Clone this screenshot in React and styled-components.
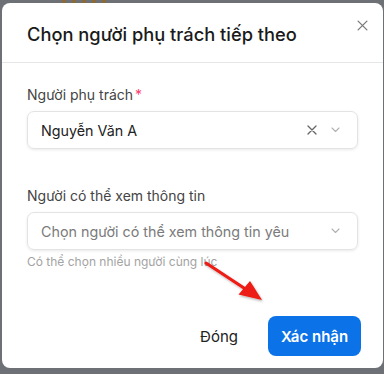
import React from "react";
import styled, { createGlobalStyle } from "styled-components";

const Global = createGlobalStyle`
  html, body { margin: 0; padding: 0; }
  body {
    background: #6d7074;
    font-family: Inter, "Noto Sans", sans-serif;
    width: 384px;
    height: 374px;
    overflow: hidden;
  }
`;

const Backdrop = styled.div`
  position: relative;
  width: 384px;
  height: 374px;
  padding: 3px 0 0 2px;
  box-sizing: border-box;
`;

const BehindBar = styled.div`
  display: flex;
  gap: 6px;
  position: absolute;
  top: 0;
  left: 62px;
  height: 3px;
`;

const BehindBit = styled.span`
  width: ${(p) => p.w}px;
  height: 3px;
  background: ${(p) => p.c};
`;

const Modal = styled.div`
  position: relative;
  width: 381px;
  height: 365px;
  background: #fff;
  border-radius: 8px;
  display: flex;
  flex-direction: column;
  box-sizing: border-box;
`;

const Header = styled.div`
  display: flex;
  justify-content: space-between;
  align-items: flex-start;
  height: 60px;
  padding: 20px 14px 0 25px;
  border-bottom: 1px solid #e6e6e6;
  box-sizing: border-box;
  flex-shrink: 0;
`;

const Title = styled.h2`
  margin: 0;
  font-size: 18.3px;
  line-height: 22px;
  font-weight: 500;
  color: #1a1a1a;
`;

const CloseBtn = styled.button`
  border: 0;
  background: none;
  padding: 0;
  margin-top: -5px;
  width: 14px;
  height: 14px;
  display: flex;
  align-items: center;
  justify-content: center;
  color: #7a7a7a;
  cursor: pointer;
`;

const Body = styled.div`
  padding: 22px 25px 0 25px;
  display: flex;
  flex-direction: column;
`;

const Field = styled.div`
  display: flex;
  flex-direction: column;
  margin-bottom: ${(p) => p.mb || 0}px;
`;

const Label = styled.label`
  font-size: 14px;
  line-height: 20px;
  color: #444;
  margin-bottom: 6px;
`;

const Req = styled.span`
  color: #ff3b6b;
  margin-left: 2px;
`;

const SelectBox = styled.div`
  height: 38px;
  box-sizing: border-box;
  border: 1px solid #e3e3e3;
  border-radius: 7px;
  box-shadow: 0 1px 3px rgba(0, 0, 0, 0.09);
  display: flex;
  align-items: center;
  padding: 0 17px 0 13px;
  gap: 14px;
`;

const Value = styled.span`
  flex: 1;
  font-size: 14.3px;
  color: ${(p) => (p.$placeholder ? "#7b7b7b" : "#222")};
  white-space: nowrap;
  overflow: hidden;
`;

const IconWrap = styled.span`
  display: flex;
  color: ${(p) => p.c};
`;

const Help = styled.div`
  margin-top: 3px;
  font-size: 12px;
  line-height: 18px;
  color: #a3a3a3;
`;

const Footer = styled.div`
  margin-top: auto;
  display: flex;
  justify-content: flex-end;
  align-items: center;
  gap: 14px;
  padding: 0 22px 12px 0;
`;

const TextBtn = styled.button`
  border: 0;
  background: none;
  font-family: inherit;
  font-size: 15px;
  color: #222;
  padding: 0 16px;
  height: 40px;
  cursor: pointer;
`;

const PrimaryBtn = styled.button`
  border: 0;
  background: #0b72e7;
  color: #fff;
  font-family: inherit;
  font-size: 15px;
  font-weight: 600;
  width: 93px;
  height: 40px;
  border-radius: 8px;
  cursor: pointer;
`;

const Arrow = styled.svg`
  position: absolute;
  left: 0;
  top: 0;
  pointer-events: none;
  overflow: visible;
`;

const XIcon = ({ size = 10, sw = 1.3 }) => (
  <svg width={size} height={size} viewBox="0 0 10 10">
    <path d="M1 1L9 9M9 1L1 9" stroke="currentColor" strokeWidth={sw} strokeLinecap="round" />
  </svg>
);

const Chevron = () => (
  <svg width="9" height="6" viewBox="0 0 9 6">
    <path d="M1 1L4.5 4.5L8 1" stroke="currentColor" strokeWidth="1.1" fill="none" strokeLinecap="round" strokeLinejoin="round" />
  </svg>
);

export default function App() {
  return (
    <>
      <Global />
      <Backdrop>
        <BehindBar>
          <BehindBit w={4} c="#8a6a3a" />
          <BehindBit w={4} c="#8a6a3a" />
          <BehindBit w={4} c="#8a6a3a" />
          <BehindBit w={4} c="#8a6a3a" />
          <BehindBit w={4} c="#8a6a3a" />
        </BehindBar>
        <Modal>
          <Header>
            <Title>Chọn người phụ trách tiếp theo</Title>
            <CloseBtn aria-label="close">
              <XIcon size={11} sw={1.2} />
            </CloseBtn>
          </Header>
          <Body>
            <Field mb={37}>
              <Label>
                Người phụ trách<Req>*</Req>
              </Label>
              <SelectBox>
                <Value>Nguyễn Văn A</Value>
                <IconWrap c="#666">
                  <XIcon size={10} sw={1.3} />
                </IconWrap>
                <IconWrap c="#b0b0b0">
                  <Chevron />
                </IconWrap>
              </SelectBox>
            </Field>
            <Field>
              <Label>Người có thể xem thông tin</Label>
              <SelectBox>
                <Value $placeholder>Chọn người có thể xem thông tin yêu</Value>
                <IconWrap c="#b0b0b0">
                  <Chevron />
                </IconWrap>
              </SelectBox>
              <Help>Có thể chọn nhiều người cùng lúc</Help>
            </Field>
          </Body>
          <Footer>
            <TextBtn>Đóng</TextBtn>
            <PrimaryBtn>Xác nhận</PrimaryBtn>
          </Footer>
          <Arrow width="381" height="365">
            <defs>
              <filter id="sh" x="-20%" y="-20%" width="140%" height="140%">
                <feDropShadow dx="1" dy="1.5" stdDeviation="1" floodColor="#000" floodOpacity="0.3" />
              </filter>
            </defs>
            <g filter="url(#sh)" transform="translate(-2,-3)">
              <line x1="206" y1="263" x2="247" y2="290" stroke="#ee1a12" strokeWidth="3" strokeLinecap="round" />
              <polygon points="262,300 238.5,294.5 250,281" fill="#ee1a12" />
            </g>
          </Arrow>
        </Modal>
      </Backdrop>
    </>
  );
}
